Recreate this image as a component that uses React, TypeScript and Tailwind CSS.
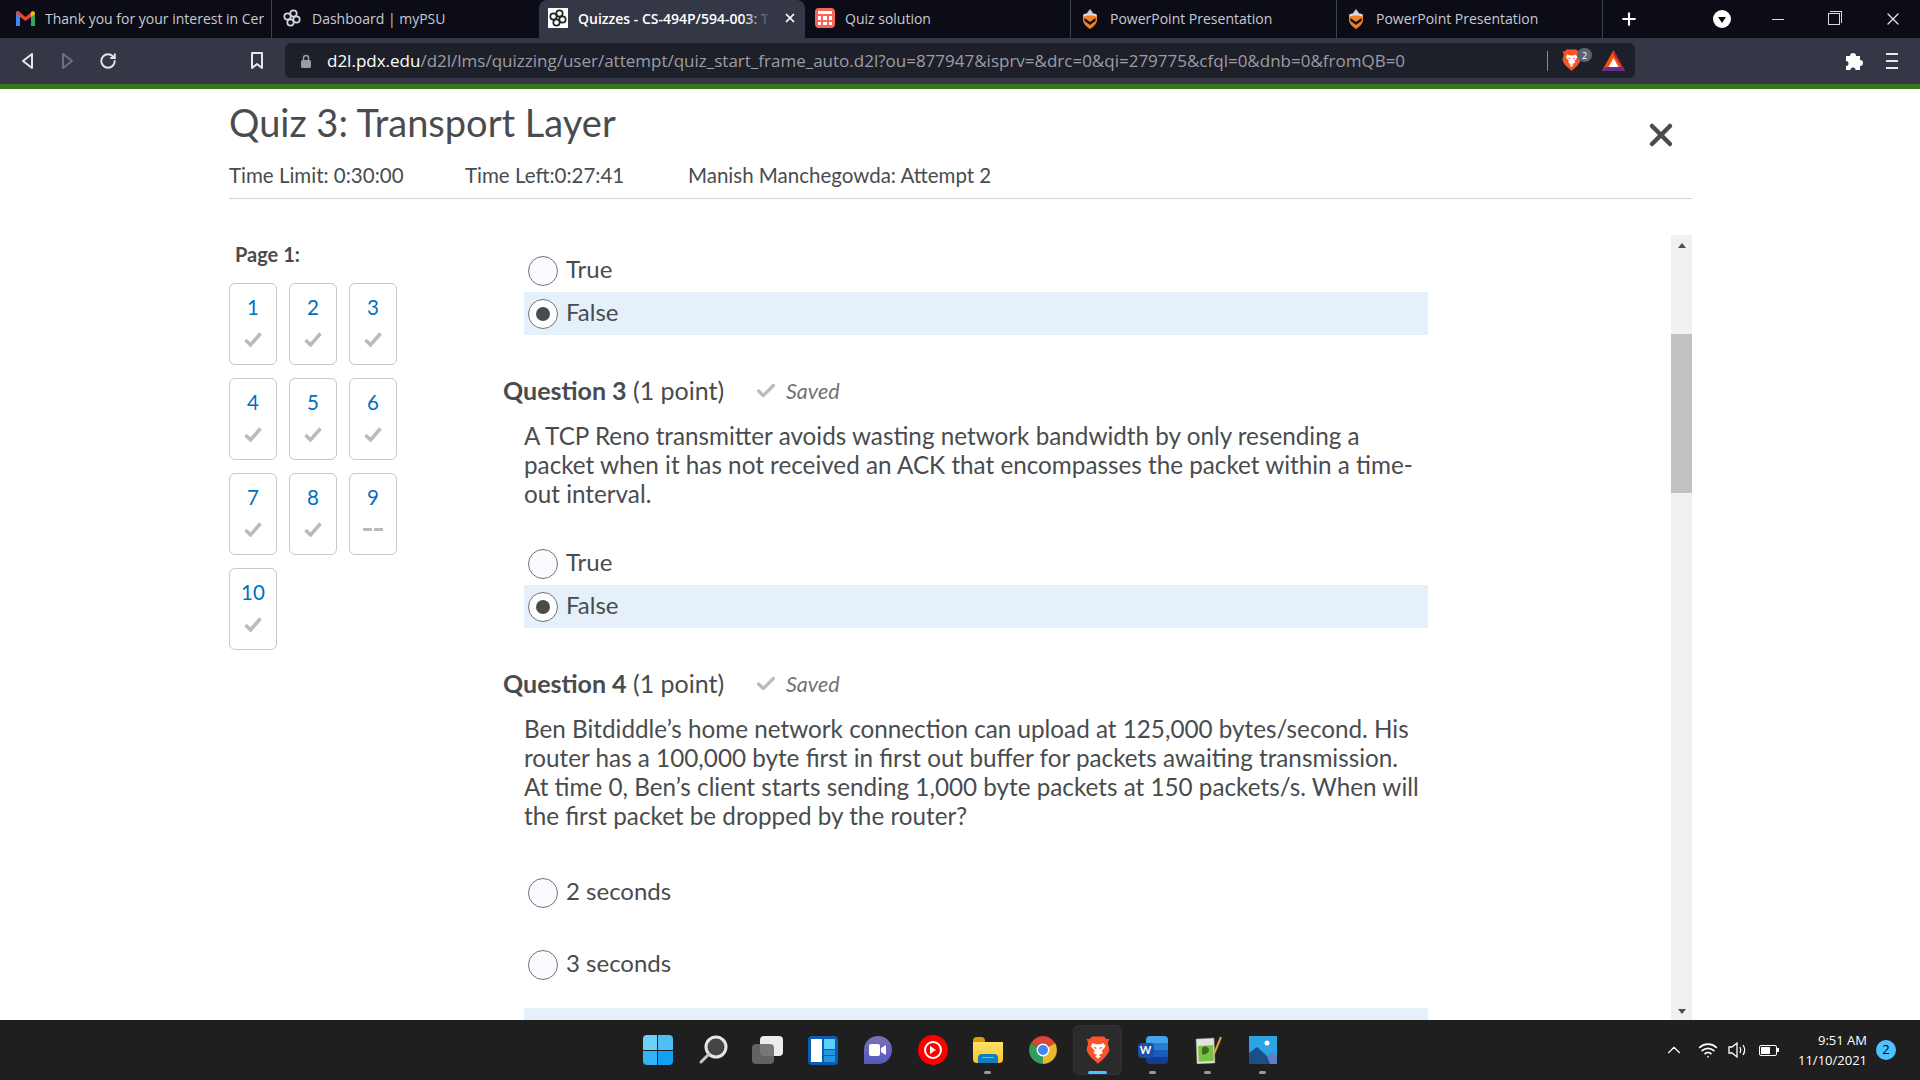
import { Check, ChevronUp, Plus, RotateCw, Wifi, X } from "lucide-react";

const sans = "[font-family:'Open_Sans',sans-serif]";

function PsuIcon({ invert }: { invert?: boolean }) {
  const ink = invert ? "#222" : "#d5d7de";
  return (
    <svg width="20" height="20" viewBox="0 0 20 20" fill="none" stroke={ink} strokeWidth="1.700">
      {invert && <rect width="20" height="20" fill="#fff" stroke="none" />}
      <circle cx="11.500" cy="5.500" r="3.200" />
      <circle cx="14.500" cy="11.500" r="3.200" />
      <circle cx="8.500" cy="14.500" r="3.200" />
      <circle cx="5.500" cy="8.500" r="3.200" />
    </svg>
  );
}

function GmailIcon() {
  return (
    <svg width="19" height="15" viewBox="0 0 19 15">
      <path d="M0 2v13h4V6l5.500 4L15 6v9h4V2c0-2-2-2.500-3-1.500L9.500 6 3 .5C2-.5 0 0 0 2z" fill="#ea4335" />
      <path d="M0 2v13h4V6z" fill="#4285f4" />
      <path d="M15 6v9h4V2z" fill="#34a853" />
      <path d="M15 1v5l4-3c0-2-2-3-4-2z" fill="#fbbc04" />
    </svg>
  );
}

function SheetIcon() {
  return (
    <div className="flex h-5 w-5 flex-col gap-[2px] rounded-sm bg-[#f2665c] p-[3px]">
      <div className="h-[3px] bg-white" />
      <div className="grid flex-1 grid-cols-3 gap-[2px]">
        <div className="bg-white" />
        <div className="bg-white" />
        <div className="bg-white" />
        <div className="bg-white" />
        <div className="bg-white" />
        <div className="bg-white" />
      </div>
    </div>
  );
}

function ShieldIcon() {
  return (
    <svg width="16" height="21" viewBox="0 0 16 21">
      <path d="M5 5l3-4 3 4z" fill="#c9cbd0" />
      <path d="M1 7c2-2 12-2 14 0v5c0 4-4 7-7 9-3-2-7-5-7-9z" fill="#f58025" />
      <path d="M1.500 6.500c3-2 10-2 13 0v2c-3-1.500-10-1.500-13 0z" fill="#d9dade" />
      <path d="M2.500 10L8 14l5.500-4v3L8 17l-5.500-4z" fill="#111" />
    </svg>
  );
}

function BraveLion({ size = 20 }: { size?: number }) {
  return (
    <svg width={size} height={size * 1.18} viewBox="0 0 22 26">
      <path d="M5.500 0.500h11l2.500 2.500 2.500-.5-1.500 4 1.500 6c-1 4-3 6-4.500 7.500L11 25.500 5 20C3.500 18.500 1.500 16.500.5 12.500L2 6.500.5 2.500l2.500.5z" fill="#fb542b" />
      <path d="M6 6.500L9 7.500h4l3-1 2 3-3.500 4 1 2-2.500 1.500-2 .5-2-.5L7 15.500l1-2-3.500-4z" fill="#fff" />
      <path d="M8.500 18.500L11 17l2.500 1.500L11 21z" fill="#fff" />
      <path d="M7.500 10.500l2 1M14.500 10.500l-2 1" stroke="#fb542b" strokeWidth="1.200" />
    </svg>
  );
}

function BatTriangle() {
  return (
    <svg width="23" height="21" viewBox="0 0 23 21">
      <path d="M11.500 0L23 21H0z" fill="#ff5000" />
      <path d="M0 21l3.500-4h16l3.500 4z" fill="#662d91" />
      <path d="M11.500 0L23 21l-3.500-4-8-13z" fill="#9e1f63" />
      <path d="M11.500 8l5 9h-10z" fill="#fff" />
    </svg>
  );
}

function Tab({ icon, title, separator }: { icon: React.ReactNode; title: string; separator?: boolean }) {
  return (
    <div className={`flex h-[38px] w-[266px] shrink-0 items-center gap-[10px] pb-[2px] pl-[9px] pr-2 ${separator ? "border-r border-[#3d404d]" : ""}`}>
      <div className="flex w-5 shrink-0 justify-center">{icon}</div>
      <span className="overflow-hidden whitespace-nowrap text-[14px] text-[#c8cad2]">{title}</span>
    </div>
  );
}

function Toolbar() {
  return (
    <div className="flex h-[46px] items-center bg-[#343746] pb-[1px] text-[#e8e8ea]">
      <div className="flex w-[285px] shrink-0 items-center">
        <svg className="ml-[20px]" width="14" height="18" viewBox="0 0 14 18" fill="none" stroke="#e8e8ea" strokeWidth="2">
          <path d="M12 2L3 9l9 7z" strokeLinejoin="round" />
        </svg>
        <svg className="ml-[27px]" width="14" height="18" viewBox="0 0 14 18" fill="none" stroke="#6d707c" strokeWidth="2">
          <path d="M2 2l9 7-9 7z" strokeLinejoin="round" />
        </svg>
        <RotateCw className="ml-[24px]" size={18} strokeWidth={2.500} />
        <svg className="ml-[133px]" width="14" height="18" viewBox="0 0 14 18" fill="none" stroke="#e8e8ea" strokeWidth="2">
          <path d="M2 1h10v15l-5-4-5 4z" strokeLinejoin="round" />
        </svg>
      </div>
      <div className="flex h-[35px] w-[1350px] shrink-0 items-center rounded-md bg-[#1e2029] pl-[15px]">
        <svg width="12" height="14" viewBox="0 0 12 14" fill="#9a9ca5">
          <rect x="1" y="6" width="10" height="8" rx="1.500" />
          <path d="M3.500 6V4a2.500 2.500 0 015 0v2" fill="none" stroke="#9a9ca5" strokeWidth="1.500" />
        </svg>
        <span className="ml-[15px] whitespace-nowrap text-[17px] text-[#9b9da6]">
          <span className="text-white">d2l.pdx.edu</span>
          /d2l/lms/quizzing/user/attempt/quiz_start_frame_auto.d2l?ou=877947&isprv=&drc=0&qi=279775&cfql=0&dnb=0&fromQB=0
        </span>
        <div className="ml-auto h-5 w-[1px] bg-[#8a8c96]" />
        <div className="relative ml-[14px]">
          <BraveLion size={19} />
          <div className="absolute -right-[11px] -top-[1px] flex h-[14px] w-[15px] items-center justify-center rounded-full bg-[#5f626e] text-[9px] text-white">2</div>
        </div>
        <div className="ml-[21px] mr-[10px]">
          <BatTriangle />
        </div>
      </div>
      <svg className="ml-[208px]" width="20" height="20" viewBox="0 0 20 20" fill="#fff">
        <path d="M3 5h4a3 3 0 1 1 6 0h4v4a3 3 0 1 1 0 6v4h-4.500a2.500 2.500 0 1 0-5 0H3v-4a2.500 2.500 0 1 0 0-5z" />
      </svg>
      <div className="ml-[23px] flex flex-col gap-[5px]">
        <div className="h-[2px] w-3 bg-[#e8e8ea]" />
        <div className="h-[2px] w-3 bg-[#e8e8ea]" />
        <div className="h-[2px] w-3 bg-[#e8e8ea]" />
      </div>
    </div>
  );
}

function BrowserChrome() {
  return (
    <div className={sans}>
      <div className="flex h-[38px] items-center bg-[#0b0c16]">
        <div className="flex h-[38px] w-[272px] shrink-0 items-center gap-[10px] border-r border-[#3d404d] pb-[2px] pl-4">
          <GmailIcon />
          <span className="w-[219px] overflow-hidden whitespace-nowrap text-[14px] text-[#c8cad2]">Thank you for your interest in Cer</span>
        </div>
        <div className="flex h-[38px] w-[267px] shrink-0 items-center gap-[10px] pb-[2px] pl-[10px]">
          <PsuIcon />
          <span className="whitespace-nowrap text-[14px] text-[#c8cad2]">Dashboard | myPSU</span>
        </div>
        <div className="flex h-[38px] w-[266px] shrink-0 items-center gap-[10px] rounded-t-lg bg-[#343746] pb-[2px] pl-[9px]">
          <PsuIcon invert />
          <span className="relative w-[193px] overflow-hidden whitespace-nowrap text-[14px] font-semibold text-white">
            Quizzes - CS-494P/594-003: T
            <span className="absolute right-0 top-0 h-full w-[30px] bg-gradient-to-r from-transparent to-[#343746]" />
          </span>
          <X size={14} strokeWidth={3} className="ml-[2px] text-white" />
        </div>
        <div className="flex h-[38px] w-[266px] shrink-0 items-center gap-[10px] border-r border-[#3d404d] pb-[2px] pl-[10px]">
          <SheetIcon />
          <span className="text-[14px] text-[#c8cad2]">Quiz solution</span>
        </div>
        <Tab icon={<ShieldIcon />} title="PowerPoint Presentation" separator />
        <Tab icon={<ShieldIcon />} title="PowerPoint Presentation" separator />
        <Plus className="ml-[16px] text-white" size={20} strokeWidth={2.500} />
        <div className="ml-[74px] flex h-[18px] w-[18px] items-center justify-center rounded-full bg-white">
          <div className="mt-[2px] h-0 w-0 border-x-[4px] border-t-[6px] border-x-transparent border-t-[#0b0c16]" />
        </div>
        <div className="ml-[41px] h-[1px] w-3 bg-[#d8d8dc]" />
        <div className="relative ml-[44px] h-3 w-3 border border-[#d8d8dc]">
          <div className="absolute -right-[3px] -top-[3px] h-3 w-3 border-r border-t border-[#d8d8dc]" />
        </div>
        <X className="ml-[43px] text-[#e8e8ea]" size={20} strokeWidth={1.500} />
      </div>
      <Toolbar />
      <div className="h-[5px] bg-[#38761d]" />
    </div>
  );
}

const tiles = [
  { n: "1", done: true },
  { n: "2", done: true },
  { n: "3", done: true },
  { n: "4", done: true },
  { n: "5", done: true },
  { n: "6", done: true },
  { n: "7", done: true },
  { n: "8", done: true },
  { n: "9", done: false },
  { n: "10", done: true },
];

function Sidebar() {
  return (
    <div className="w-[274px] shrink-0">
      <div className="mb-[17px] mt-[7px] pl-[6px] text-[20px] font-bold leading-[24px] text-[#494c4e]">Page 1:</div>
      <div className="grid w-[168px] grid-cols-3 gap-x-3 gap-y-[13px]">
        {tiles.map((t) => (
          <div key={t.n} className="flex h-[82px] w-[48px] flex-col items-center rounded-md border border-[#c4c9ce] pt-[11px]">
            <span className="text-[20.500px] leading-[24px] text-[#006fbf]">{t.n}</span>
            {t.done ? (
              <svg className="mt-[13px]" width="18" height="15" viewBox="0 0 18 15" fill="none" stroke="#b7bcc1" strokeWidth="3.500">
                <path d="M1.500 8l5 5L16.500 1.500" />
              </svg>
            ) : (
              <span className="mt-[19px] flex gap-[2px]">
                <span className="h-[3px] w-[9px] bg-[#b7bcc1]" />
                <span className="h-[3px] w-[9px] bg-[#b7bcc1]" />
              </span>
            )}
          </div>
        ))}
      </div>
    </div>
  );
}

function Radio({ label, selected, className = "" }: { label: string; selected?: boolean; className?: string }) {
  return (
    <div className={`flex h-[43px] w-[904px] items-center pl-[4px] ${selected ? "bg-[#e6f0fa]" : ""} ${className}`}>
      <div className={`flex h-[30px] w-[30px] items-center justify-center rounded-full border border-[#6e7376] ${selected ? "bg-white" : "bg-[#f9fbff]"}`}>
        {selected && <div className="h-[14px] w-[14px] rounded-full bg-[#494c4e]" />}
      </div>
      <span className="-mt-[3px] ml-[8px] text-[24px] leading-[28px] text-[#494c4e]">{label}</span>
    </div>
  );
}

function QuestionHead({ n }: { n: number }) {
  return (
    <div className="-ml-[21px] flex h-[30px] items-center text-[#494c4e]">
      <span className="w-[252px] whitespace-nowrap text-[25px]">
        <span className="font-bold">Question {n}</span> (1 point)
      </span>
      <Check size={22} strokeWidth={3.500} className="text-[#b7bcc1]" />
      <span className="ml-[9px] text-[21.500px] italic text-[#6e7376]">Saved</span>
    </div>
  );
}

function Questions() {
  return (
    <div className="relative min-w-0 flex-1 overflow-hidden pl-[21px]">
      <div className="mt-[14px]">
        <Radio label="True" className="h-[42px]" />
        <Radio label="False" selected />
        <div className="mt-[41px]">
          <QuestionHead n={3} />
        </div>
        <p className="mt-[15px] w-[900px] text-[24.250px] leading-[29px] text-[#494c4e]">
          A TCP Reno transmitter avoids wasting network bandwidth by only resending a packet when it has not received an ACK that encompasses the packet within a time-out interval.
        </p>
        <Radio label="True" className="mt-[34px] h-[42px]" />
        <Radio label="False" selected />
        <div className="mt-[41px]">
          <QuestionHead n={4} />
        </div>
        <p className="mt-[15px] w-[900px] text-[24.250px] leading-[29px] text-[#494c4e]">
          Ben Bitdiddle’s home network connection can upload at 125,000 bytes/second. His router has a 100,000 byte first in first out buffer for packets awaiting transmission. At time 0, Ben’s client starts sending 1,000 byte packets at 150 packets/s. When will the first packet be dropped by the router?
        </p>
        <Radio label="2 seconds" className="mt-[41px]" />
        <Radio label="3 seconds" className="mt-[29px]" />
        <div className="mt-[22px] h-[40px] w-[904px] bg-[#e6f0fa]" />
      </div>
    </div>
  );
}

function Scrollbar() {
  return (
    <div className="flex w-[21px] shrink-0 flex-col bg-[#f1f1f1]">
      <div className="flex h-[21px] items-center justify-center">
        <div className="h-0 w-0 border-x-[4px] border-b-[5px] border-x-transparent border-b-[#505050]" />
      </div>
      <div className="mt-[78px] h-[159px] bg-[#c1c1c1]" />
      <div className="mt-auto flex h-[17px] items-center justify-center">
        <div className="h-0 w-0 border-x-[4px] border-t-[5px] border-x-transparent border-t-[#505050]" />
      </div>
    </div>
  );
}

function TaskIcon({ children, dot, active }: { children: React.ReactNode; dot?: boolean; active?: boolean }) {
  return (
    <div className="relative flex h-[50px] w-[55px] items-center justify-center">
      {active && <div className="absolute left-[3px] top-0 h-[50px] w-[49px] rounded-md border border-[#333] bg-[#2b2b2b]" />}
      <div className="relative flex items-center justify-center">{children}</div>
      {dot && <div className="absolute bottom-[1px] left-[24px] h-[3px] w-[7px] rounded-full bg-[#9a9a9a]" />}
      {active && <div className="absolute bottom-[1px] left-[18px] h-[3px] w-[19px] rounded-full bg-[#4cc2ff]" />}
    </div>
  );
}

function Taskbar() {
  return (
    <div className="flex h-[60px] items-center bg-[#1f1f1f] text-white">
      <div className="w-[630px] shrink-0" />
      <div className="flex w-[660px] shrink-0">
        <TaskIcon>
          <div className="grid h-[30px] w-[30px] grid-cols-2 gap-[1px]">
            <div className="rounded-tl-sm bg-[#6fd0f8]" />
            <div className="rounded-tr-sm bg-[#4fc0f6]" />
            <div className="rounded-bl-sm bg-[#33b4f5]" />
            <div className="rounded-br-sm bg-[#12a0f2]" />
          </div>
        </TaskIcon>
        <TaskIcon>
          <svg width="30" height="30" viewBox="0 0 30 30" fill="none">
            <circle cx="18" cy="12" r="10" fill="#454545" stroke="#e6e6e6" strokeWidth="3" />
            <path d="M11 19L3 27" stroke="#c8c8c8" strokeWidth="3" strokeLinecap="round" />
          </svg>
        </TaskIcon>
        <TaskIcon>
          <div className="relative h-[28px] w-[31px]">
            <div className="absolute right-0 top-0 h-[20px] w-[23px] rounded-sm bg-[#ececec]" />
            <div className="absolute bottom-0 left-0 h-[20px] w-[22px] rounded-sm bg-[#6a6a6a]/90" />
          </div>
        </TaskIcon>
        <TaskIcon>
          <div className="flex h-[29px] w-[30px] gap-[2px] rounded-sm bg-[#0a5db0] p-[3px]">
            <div className="w-[11px] bg-white" />
            <div className="flex flex-1 flex-col gap-[1px]">
              <div className="flex-[2] bg-[#5cd0fb]" />
              <div className="flex-1 bg-[#1f96e0]" />
              <div className="flex-1 bg-[#1f96e0]" />
            </div>
          </div>
        </TaskIcon>
        <TaskIcon>
          <div className="flex h-[28px] w-[28px] items-center justify-center rounded-full rounded-bl-sm bg-gradient-to-b from-[#7b6fb8] to-[#5558c0]">
            <svg width="17" height="12" viewBox="0 0 17 12" fill="#fff">
              <rect width="11" height="12" rx="2" />
              <path d="M12 4l5-3v10l-5-3z" />
            </svg>
          </div>
        </TaskIcon>
        <TaskIcon>
          <div className="flex h-[30px] w-[30px] items-center justify-center rounded-full bg-[#f00]">
            <div className="flex h-[18px] w-[18px] items-center justify-center rounded-full border-2 border-white">
              <div className="ml-[1px] h-0 w-0 border-y-[4px] border-l-[6px] border-y-transparent border-l-white" />
            </div>
          </div>
        </TaskIcon>
        <TaskIcon dot>
          <div className="relative h-[26px] w-[30px]">
            <div className="absolute left-0 top-0 h-[8px] w-[12px] rounded-t-sm bg-[#d69e00]" />
            <div className="absolute bottom-0 left-0 h-[21px] w-[30px] rounded-b-sm bg-gradient-to-b from-[#ffe066] to-[#fcc419]" />
            <div className="absolute bottom-0 left-[5px] flex h-[9px] w-[20px] items-start justify-center rounded-t-sm bg-[#0f7fc1] pt-[3px]">
              <div className="h-[1px] w-[12px] bg-[#5cc4f5]" />
            </div>
          </div>
        </TaskIcon>
        <TaskIcon>
          <svg width="28" height="28" viewBox="0 0 28 28">
            <path d="M14 14L1.900 7A14 14 0 0 1 26.100 7Z" fill="#db4437" />
            <path d="M14 14L26.100 7A14 14 0 0 1 14 28Z" fill="#e8b82f" />
            <path d="M14 14L14 28A14 14 0 0 1 1.900 7Z" fill="#2f9e58" />
            <circle cx="14" cy="14" r="6.500" fill="#fff" />
            <circle cx="14" cy="14" r="5" fill="#4285f4" />
          </svg>
        </TaskIcon>
        <TaskIcon active>
          <BraveLion size={24} />
        </TaskIcon>
        <TaskIcon dot>
          <div className="relative h-[28px] w-[30px]">
            <div className="absolute right-0 top-0 flex h-[28px] w-[22px] flex-col overflow-hidden rounded-sm">
              <div className="flex-1 bg-[#41a5ee]" />
              <div className="flex-1 bg-[#2b7cd3]" />
              <div className="flex-1 bg-[#185abd]" />
              <div className="flex-1 bg-[#103f91]" />
            </div>
            <div className="absolute left-0 top-[7px] flex h-[15px] w-[16px] items-center justify-center rounded-sm bg-[#1a4fa8] text-[11px] font-bold text-white">W</div>
          </div>
        </TaskIcon>
        <TaskIcon dot>
          <svg width="28" height="28" viewBox="0 0 28 28">
            <path d="M2 3l18-1 1 25-18 1z" fill="#e4e4dc" stroke="#8a8a80" strokeWidth=".5" />
            <path d="M4 10l15-1 .8 16-15 .7z" fill="#7cc242" />
            <path d="M8 12c3-3 7-1 7 2s-5 6-7 4z" fill="#3c6e1f" />
            <path d="M20 18L27 1" stroke="#d9a441" strokeWidth="2" />
          </svg>
        </TaskIcon>
        <TaskIcon dot>
          <svg width="28" height="28" viewBox="0 0 28 28">
            <rect width="28" height="28" fill="#2aa4e4" />
            <circle cx="18" cy="7" r="2.500" fill="#fff" />
            <path d="M16 28l4-10 3-2 5 5v7z" fill="#5f7fc8" />
            <path d="M0 28V17l8-6 10 9 3 8z" fill="#1b4f8a" />
          </svg>
        </TaskIcon>
      </div>
      <ChevronUp className="ml-[373px] text-white" size={22} strokeWidth={1.200} />
      <Wifi className="ml-[13px] text-white" size={20} />
      <svg className="ml-[10px]" width="20" height="18" viewBox="0 0 20 18" fill="none" stroke="#fff" strokeWidth="1.300">
        <path d="M1 6h3l5-4v14l-5-4H1zM12 6c1 2 1 4 0 6M15 4c2 3 2 7 0 10" />
      </svg>
      <div className="ml-[11px] flex items-center">
        <div className="flex h-[11px] w-[18px] items-center rounded-[2px] border border-white p-[1px]">
          <div className="h-full w-[9px] bg-white" />
        </div>
        <div className="h-1 w-[2px] bg-white" />
      </div>
      <div className={`ml-[11px] w-[77px] text-right text-[13px] leading-[20px] ${sans}`}>
        <div>9:51 AM</div>
        <div>11/10/2021</div>
      </div>
      <div className={`ml-[9px] flex h-5 w-5 items-center justify-center rounded-full bg-[#4cc2ff] text-[13px] text-black ${sans}`}>2</div>
    </div>
  );
}

export default function App() {
  return (
    <div className="flex h-[1080px] w-[1920px] flex-col overflow-hidden bg-white [font-family:Lato,sans-serif]">
      <BrowserChrome />
      <div className="flex min-h-0 flex-1 flex-col pl-[229px] pr-[228px]">
        <div className="relative h-[110px] shrink-0 border-b border-[#cdd5dc] text-[#494c4e]">
          <h1 className="pt-[9px] text-[38px] leading-[48px]">Quiz 3: Transport Layer</h1>
          <div className="mt-[16px] flex text-[20.500px] leading-[26px]">
            <span className="w-[236px]">Time Limit: 0:30:00</span>
            <span className="w-[223px]">Time Left:0:27:41</span>
            <span>Manish Manchegowda: Attempt 2</span>
          </div>
          <X className="absolute right-[13px] top-[28px] text-[#494c4e]" size={36} strokeWidth={3} />
        </div>
        <div className="flex min-h-0 flex-1 pt-[36px]">
          <Sidebar />
          <Questions />
          <Scrollbar />
        </div>
      </div>
      <Taskbar />
    </div>
  );
}
